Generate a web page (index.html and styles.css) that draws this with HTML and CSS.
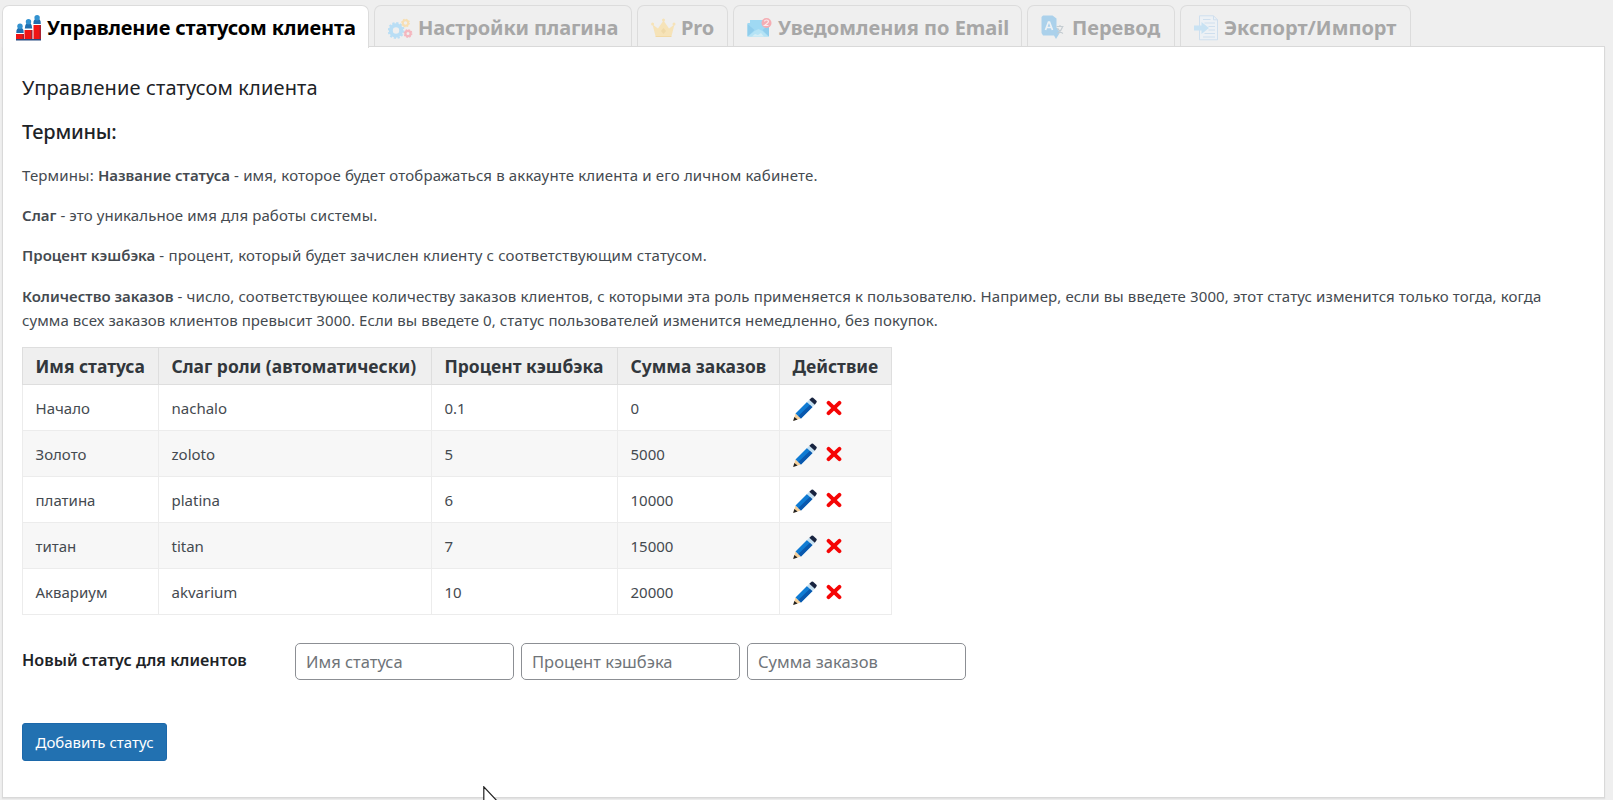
FILE: index.html
```
<!DOCTYPE html>
<html lang="ru">
<head>
<meta charset="utf-8">
<title>Управление статусом клиента</title>
<link rel="stylesheet" href="styles.css">
</head>
<body>
<svg class="defs" width="0" height="0">
  <symbol id="pencil" viewBox="0 0 24 24">
    <path d="M.3 23.700 2.500 16.500l5.500 5z" fill="#f5cf9a"/>
    <path d="M.2 23.900 1.300 20l3.300 2.400z" fill="#222"/>
    <path d="M2.500 16.500 14 5l5.500 5L8 21.500z" fill="#0f7bd3"/>
    <path d="M5.300 19 17 7.700l2.500 2.300L8 21.500z" fill="#0a58ad"/>
    <path d="m14 5 2.300-2.300 5.500 5L19.500 10z" fill="#c3dff0"/>
    <path d="M16.300 2.700 18.500.8q.8-.7 1.600 0l3.300 3q.8.8 0 1.600l-1.600 2.300z" fill="#182440"/>
  </symbol>
  <symbol id="cross" viewBox="0 0 16 16">
    <path d="M2.600 2.800 13.400 13.200M13.400 2.800 2.600 13.200" stroke="#f50505" stroke-width="3.900" stroke-linecap="round"/>
  </symbol>
</svg>

<nav class="tabs">
  <a class="tab tab-status active">
    <svg class="icon" viewBox="0 0 26 26">
      <path d="M0 19h7.500v6H0zM8.500 15H16v10H8.500zM17.500 10H25v15h-7.500z" fill="#f01414"/>
      <path d="M6.500 19H8v6H6.500zM15 15h1.500v10H15zM23.500 10H25v15h-1.500z" fill="#a92130"/>
      <path d="M.3 18q0-4 2-5.500h3.400q2 1.500 2 5.500zM8.800 13.500q0-4 2-5.500h3.400q2 1.500 2 5.500zM17.400 9q0-4 2-5.500h3.400q2 1.500 2 5.500z" fill="#1f6faf"/>
      <circle cx="4" cy="11.300" r="2.700" fill="#3292d0"/><circle cx="12.500" cy="6.800" r="2.700" fill="#3292d0"/><circle cx="21.100" cy="2.700" r="2.700" fill="#3292d0"/>
      <path d="M0 24h25v1.500H0z" fill="#294b80"/>
    </svg>
    <span>Управление статусом клиента</span>
  </a>
  <a class="tab tab-settings">
    <svg class="icon" viewBox="0 0 26 26" fill="none">
      <circle cx="8" cy="15.500" r="5.200" stroke="#b9def5" stroke-width="4"/>
      <circle cx="8" cy="15.500" r="7.500" stroke="#b9def5" stroke-width="2" stroke-dasharray="2.200 1.730"/>
      <circle cx="17.500" cy="8" r="2.700" stroke="#f7dfb3" stroke-width="2"/>
      <circle cx="17.500" cy="8" r="3.800" stroke="#f7dfb3" stroke-width="1.200" stroke-dasharray="1.600 1.380"/>
      <circle cx="20" cy="18.500" r="2.600" stroke="#f4b7bf" stroke-width="2.200"/>
      <circle cx="20" cy="18.500" r="3.800" stroke="#f4b7bf" stroke-width="1.200" stroke-dasharray="1.600 1.380"/>
    </svg>
    <span>Настройки плагина</span>
  </a>
  <a class="tab tab-pro">
    <svg class="icon" viewBox="0 0 26 26">
      <path d="M1.500 9.500 7 13.500 12.500 5.500l5.500 8 5.500-4-3 11.500h-16z" fill="#f6e3b8"/>
      <circle cx="1.600" cy="9" r="1.500" fill="#f6e3b8"/><circle cx="12.500" cy="5" r="1.500" fill="#f6e3b8"/><circle cx="23" cy="9" r="1.500" fill="#f6e3b8"/>
      <path d="m12.500 13 2.500 3-2.500 3-2.500-3z" fill="#efd9a8"/><path d="M4.500 21.500h16" stroke="#f2d9a4"/>
    </svg>
    <span>Pro</span>
  </a>
  <a class="tab tab-mail">
    <svg class="icon" viewBox="0 0 26 26">
      <path d="M3 5h16v4h3v12.500H.5V8H3z" fill="#9fd9f3"/>
      <path d="M.5 9v12.500L7.500 15zM22 10v11.500L15.500 15z" fill="#90cdec"/>
      <path d="m1 21.500 6.500-5.500 4-2 4 2 6 5.500z" fill="#b5e3f5"/>
      <path d="m5 21.500 3-2.500 3 1 3-2 3 3.500z" fill="#d3edf5"/>
      <circle cx="19.500" cy="8" r="5" fill="#f5adb3"/>
      <path d="M17.500 6.500q0-1.500 2-1.500t2 1.500q0 1-4 4h4" stroke="#faecee" stroke-width="1.200" fill="none"/>
    </svg>
    <span>Уведомления по Email</span>
  </a>
  <a class="tab tab-translate">
    <svg class="icon" viewBox="0 0 26 26">
      <path d="M2 .5h9.500l4 3v9l3.500 5-4 6.500-2-3.500H2L.5 18V2z" fill="#abd1eb"/>
      <path d="m4.500 15 3-8h1l3 8M5.800 12.500h4.500" stroke="#edf2f5" stroke-width="1.700" fill="none"/>
      <path d="M15.500 11.500h7M19 10v2M21.500 12q-1.500 4.500-5 6.500M16.500 13q2 4 5.500 5.500" stroke="#c5cdd2" stroke-width="1.200" fill="none"/>
    </svg>
    <span>Перевод</span>
  </a>
  <a class="tab tab-export">
    <svg class="icon" viewBox="0 0 26 26" fill="none">
      <path d="M5.500.8h14l4 4v20h-18z" fill="#edf1f5" stroke="#cfdfee"/>
      <path d="M19.500.8v4h4M9 4.500h7.500M10.500 8H21M14.500 11.500H21M14.500 15H21M10.500 18.500H21M9 22h12" stroke="#cfdfee"/>
      <path d="M0 10.500h7.500V7L15 13l-7.500 6v-3.500H0z" fill="#c8e2f3"/>
    </svg>
    <span>Экспорт/Импорт</span>
  </a>
</nav>

<main class="panel">
  <h2 class="title">Управление статусом клиента</h2>
  <h3 class="subtitle">Термины:</h3>
  <p class="p1">Термины: <b>Название статуса</b> - имя, которое будет отображаться в аккаунте клиента и его личном кабинете.</p>
  <p class="p2"><b>Слаг</b> - это уникальное имя для работы системы.</p>
  <p class="p3"><b>Процент кэшбэка</b> - процент, который будет зачислен клиенту с соответствующим статусом.</p>
  <p class="p4"><b>Количество заказов</b> - число, соответствующее количеству заказов клиентов, с которыми эта роль применяется к пользователю. Например, если вы введете 3000, этот статус изменится только тогда, когда<br><span class="second-line">сумма всех заказов клиентов превысит 3000. Если вы введете 0, статус пользователей изменится немедленно, без покупок.</span></p>

  <table class="statuses">
    <colgroup><col class="c-name"><col class="c-slug"><col class="c-percent"><col class="c-sum"><col class="c-action"></colgroup>
    <thead><tr><th>Имя статуса</th><th>Слаг роли (автоматически)</th><th>Процент кэшбэка</th><th>Сумма заказов</th><th>Действие</th></tr></thead>
    <tbody>
      <tr><td>Начало</td><td>nachalo</td><td>0.1</td><td>0</td><td><div class="actions"><svg class="edit"><use href="#pencil"/></svg><svg class="remove"><use href="#cross"/></svg></div></td></tr>
      <tr><td>Золото</td><td>zoloto</td><td>5</td><td>5000</td><td><div class="actions"><svg class="edit"><use href="#pencil"/></svg><svg class="remove"><use href="#cross"/></svg></div></td></tr>
      <tr><td>платина</td><td>platina</td><td>6</td><td>10000</td><td><div class="actions"><svg class="edit"><use href="#pencil"/></svg><svg class="remove"><use href="#cross"/></svg></div></td></tr>
      <tr><td>титан</td><td>titan</td><td>7</td><td>15000</td><td><div class="actions"><svg class="edit"><use href="#pencil"/></svg><svg class="remove"><use href="#cross"/></svg></div></td></tr>
      <tr><td>Аквариум</td><td>akvarium</td><td>10</td><td>20000</td><td><div class="actions"><svg class="edit"><use href="#pencil"/></svg><svg class="remove"><use href="#cross"/></svg></div></td></tr>
    </tbody>
  </table>

  <form class="new-status">
    <label class="form-label">Новый статус для клиентов</label>
    <input type="text" placeholder="Имя статуса">
    <input type="text" placeholder="Процент кэшбэка">
    <input type="text" placeholder="Сумма заказов">
  </form>
  <button class="submit" type="button">Добавить статус</button>
</main>
<svg class="cursor" viewBox="0 0 16 24"><path d="M.8.8v19l4.300-4 3 7 3-1.300-3-6.500h6z" fill="#fff" stroke="#222" stroke-width="1.200"/></svg>
</body>
</html>
```
FILE: styles.css
```
* { box-sizing: border-box; }
body {
  margin: 0;
  height: 800px;
  overflow: hidden;
  position: relative;
  background: #efefef;
  color: #444a50;
  font: 15px/24px "Noto Sans", "Open Sans", sans-serif;
}
.defs { position: absolute; }

/* Tabs */
.tabs { display: flex; padding: 5px 0 0 2px; height: 46px; }
.tab {
  display: flex;
  align-items: flex-start;
  height: 41px;
  margin-right: 5px;
  padding: 9px 0 0 13px;
  border: 1px solid #dcdcdc;
  border-bottom: 0;
  border-radius: 7px 7px 0 0;
  color: #a7a7a7;
  font-size: 20px;
  font-weight: 700;
  line-height: 26px;
  letter-spacing: -.15px;
  white-space: nowrap;
}
.tab.active {
  position: relative;
  z-index: 1;
  height: 43px;
  background: #fff;
  color: #000;
}
.icon { width: 26px; height: 26px; margin-right: 5px; flex: none; }
.tab-status { width: 367px; }
.tab-settings { width: 258px; }
.tab-settings .icon, .tab-pro .icon { margin-right: 4px; }
.tab-pro { width: 91px; }
.tab-mail { width: 289px; letter-spacing: 0; }
.tab-translate { width: 148px; letter-spacing: 0; }
.tab-export { width: 231px; letter-spacing: 0; }
.tab-export .icon { margin-right: 4px; }

/* Panel */
.panel {
  margin-left: 2px;
  width: 1603px;
  height: 752px;
  padding: 25px 19px 0;
  background: #fff;
  border: 1px solid #d9d9d9;
  box-shadow: 0 1px 1px #e2e2e2;
}
h2, h3, p { margin: 0; white-space: nowrap; }
.title { font-size: 20px; line-height: 32px; font-weight: 400; letter-spacing: .14px; color: #1d2327; }
.subtitle { margin-top: 12px; font-size: 20px; line-height: 32px; font-weight: 500; letter-spacing: -.2px; color: #1d2327; }
p { margin-top: 16px; }
.p1 { margin-top: 15px; letter-spacing: .155px; }
.p2 { letter-spacing: .1px; }
.p3 { letter-spacing: .18px; }
.p4 { margin-top: 17px; letter-spacing: .118px; }
.second-line { letter-spacing: .08px; }
b { font-weight: 600; letter-spacing: 0; }

/* Status table */
.statuses {
  width: 869px;
  margin-top: 15px;
  table-layout: fixed;
  border-collapse: collapse;
}
.c-name { width: 136px; }
.c-slug { width: 273px; }
.c-percent { width: 186px; }
.c-sum { width: 162px; }
.c-action { width: 112px; }
th, td { padding: 0 0 0 12.500px; text-align: left; white-space: nowrap; border: 1px solid #ececec; }
th { height: 37px; background: #efefef; border-color: #dedede; font-size: 17.450px; font-weight: 700; color: #32373c; }
td { height: 46px; padding-top: 0; }
tbody tr:nth-child(even) { background: #f7f7f7; }
.actions { display: flex; align-items: center; gap: 9px; padding-top: 2px; }
.edit { width: 24px; height: 24px; }
.remove { width: 16px; height: 16px; margin-top: -2px; }

/* New status form */
.new-status { display: flex; gap: 7px; margin-top: 28px; }
.form-label { width: 266px; font-size: 16.200px; line-height: 34px; font-weight: 600; color: #1d2327; white-space: nowrap; }
input {
  width: 219px;
  height: 37px;
  padding: 0 10px;
  border: 1px solid #8c8f94;
  border-radius: 5px;
  font: 16.500px/30px "Noto Sans", "Open Sans", sans-serif;
  background: #fff;
}
input::placeholder { color: #6f7479; opacity: 1; }
.submit {
  display: block;
  width: 145px;
  height: 38px;
  margin-top: 43px;
  padding: 0;
  border: 1px solid #1c68aa;
  border-radius: 3px;
  background: #2271b1;
  color: #fff;
  font: 15px/34px "Noto Sans", "Open Sans", sans-serif;
}
.cursor { position: absolute; left: 483px; top: 786px; width: 16px; height: 24px; }
```
